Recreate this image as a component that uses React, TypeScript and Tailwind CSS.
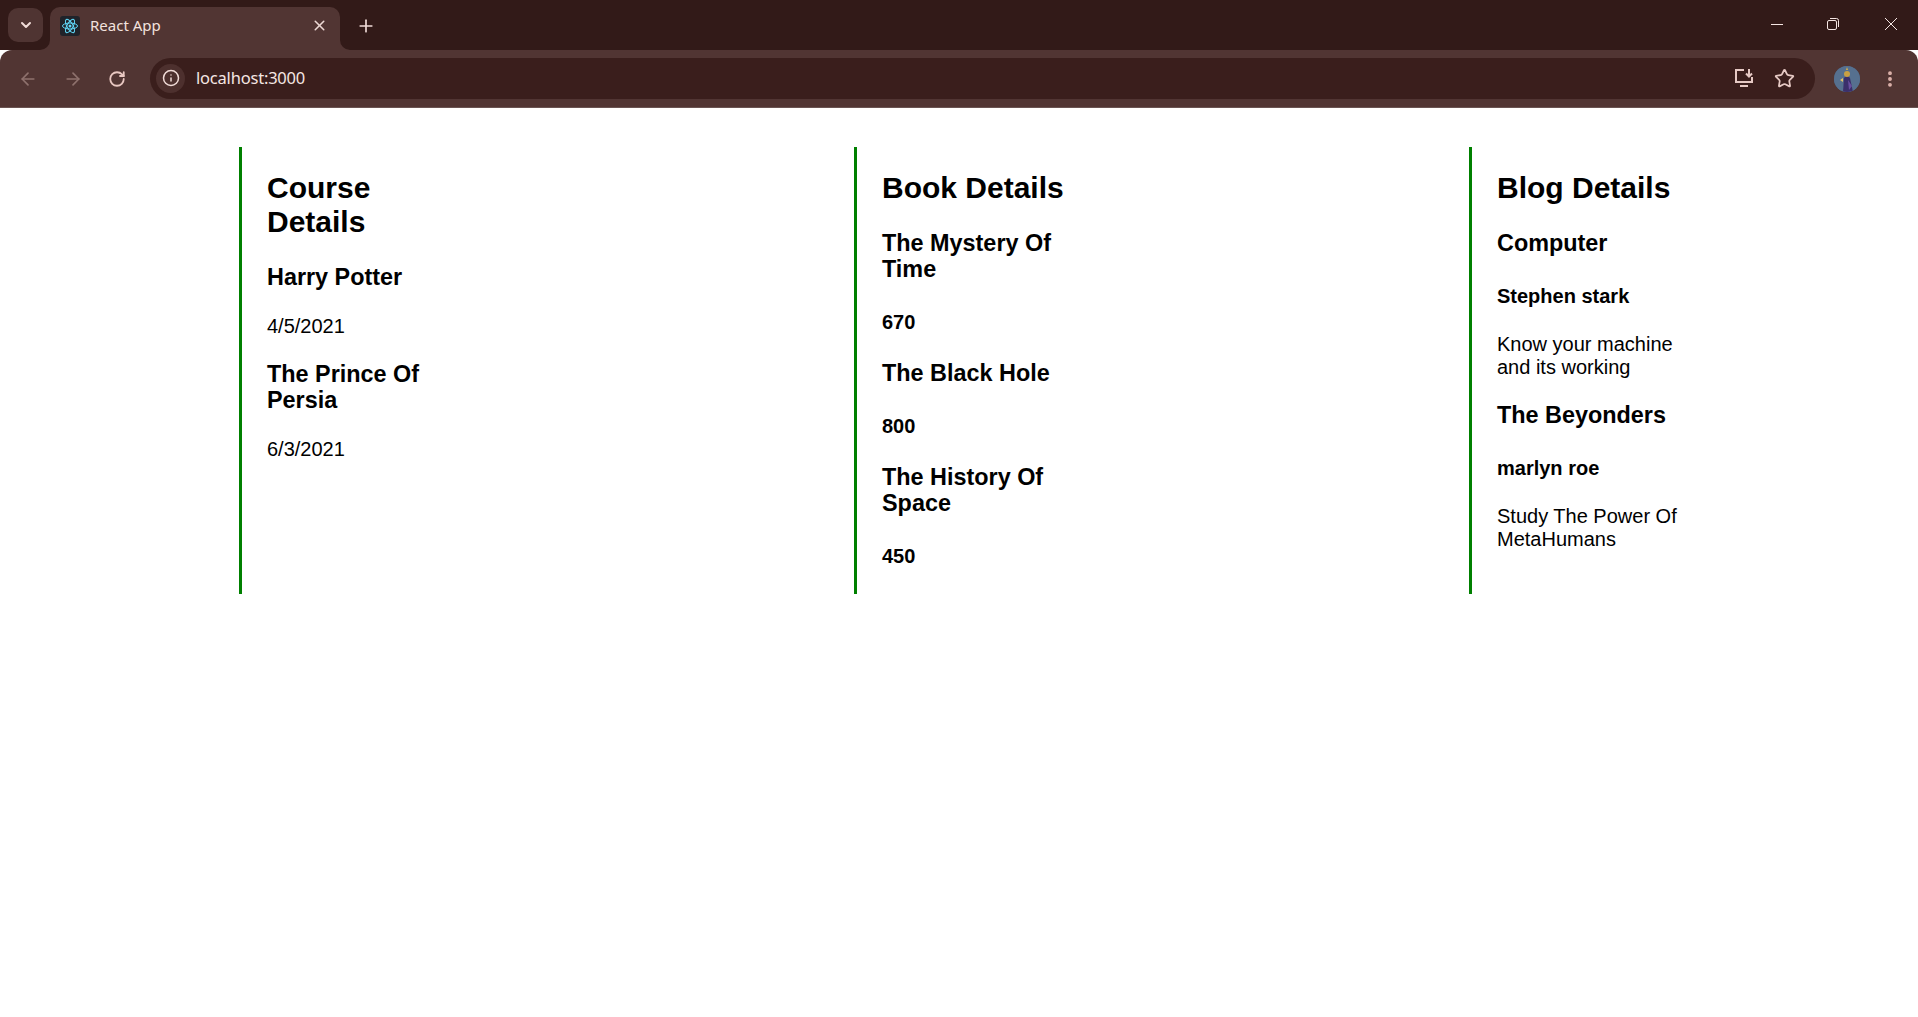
import { ArrowLeft, ArrowRight, ChevronDown, EllipsisVertical, Info, Plus, RotateCw, Star, X } from 'lucide-react';

const courses = [
  { name: 'Harry Potter', date: '4/5/2021' },
  { name: 'The Prince Of Persia', date: '6/3/2021' },
];

const books = [
  { name: 'The Mystery Of Time', price: 670 },
  { name: 'The Black Hole', price: 800 },
  { name: 'The History Of Space', price: 450 },
];

const blogs = [
  { title: 'Computer', author: 'Stephen stark', text: 'Know your machine and its working' },
  { title: 'The Beyonders', author: 'marlyn roe', text: 'Study The Power Of MetaHumans' },
];

function ReactLogo() {
  return (
    <div className="w-[20px] h-[20px] rounded-[3px] bg-[#20232a] flex items-center justify-center">
      <svg width="18" height="18" viewBox="-12 -12 24 24" fill="none" stroke="#61dafb" strokeWidth="1.3">
        <ellipse rx="10" ry="4" />
        <ellipse rx="10" ry="4" transform="rotate(60)" />
        <ellipse rx="10" ry="4" transform="rotate(120)" />
        <circle r="2" fill="#61dafb" stroke="none" />
      </svg>
    </div>
  );
}

function InstallIcon() {
  return (
    <svg width="22" height="22" viewBox="0 0 22 22" fill="none" stroke="#e6c9c4" strokeWidth="2">
      <path d="M11 3H3v12h16v-5" />
      <path d="M7 19h8" />
      <path d="M16 2v7M13 6.5l3 3 3-3" />
    </svg>
  );
}

function Avatar() {
  return (
    <div className="w-[26px] h-[26px] rounded-full overflow-hidden bg-[#4a6384]">
      <svg width="26" height="26" viewBox="0 0 26 26">
        <rect width="26" height="26" fill="#56708f" />
        <path d="M9 26 L10 12 Q13 8 16 12 L19 26 Z" fill="#3b2f6b" />
        <circle cx="13" cy="8" r="3" fill="#c9a043" />
        <path d="M12 4 L13 1 L14 4 Z" fill="#d9b04a" />
        <path d="M6 14 L9 12 L9 16 Z" fill="#e1c06a" />
        <path d="M14 14 L18 20 L15 24 Z" fill="#6a4ea0" />
      </svg>
    </div>
  );
}

function BrowserChrome() {
  return (
    <div className="font-['Noto_Sans',sans-serif]">
      {/* tab strip */}
      <div className="h-[50px] bg-[#321a18] flex items-end relative">
        <div className="absolute left-[8px] top-[8px] w-[35px] h-[34px] rounded-[10px] bg-[#4f3432] flex items-center justify-center">
          <ChevronDown size={16} strokeWidth={3} color="#f1dcd8" />
        </div>
        <div className="ml-[50px] w-[290px] h-[43px] bg-[#513533] rounded-t-[10px] flex items-center pl-[10px] pr-[12px] pb-[6px] relative">
          <svg className="absolute left-[-10px] bottom-0" width="10" height="10" viewBox="0 0 10 10">
            <path d="M10 0 V10 H0 A10 10 0 0 0 10 0 Z" fill="#513533" />
          </svg>
          <svg className="absolute right-[-10px] bottom-0" width="10" height="10" viewBox="0 0 10 10">
            <path d="M0 0 V10 H10 A10 10 0 0 1 0 0 Z" fill="#513533" />
          </svg>
          <ReactLogo />
          <span className="ml-[10px] text-[15px] text-[#f3e2de] mb-[1px]">React App</span>
          <X className="ml-auto" size={17} strokeWidth={2.2} color="#ecd8d4" />
        </div>
        <div className="ml-[16px] h-[43px] pb-[6px] flex items-center">
          <Plus size={20} strokeWidth={2} color="#f1dcd8" />
        </div>
        <div className="ml-auto h-[50px] flex items-center pb-[3px]">
          <svg width="14" height="14" viewBox="0 0 14 14" className="mr-[42px]">
            <path d="M1 7.5H13" stroke="#f5e6e3" strokeWidth="1" />
          </svg>
          <svg width="14" height="14" viewBox="0 0 14 14" className="mr-[44px]">
            <rect x="1.5" y="3.5" width="9" height="9" rx="1.5" fill="none" stroke="#f5e6e3" strokeWidth="1" />
            <path d="M4 1.5h6.5a2 2 0 0 1 2 2V10" fill="none" stroke="#f5e6e3" strokeWidth="1" />
          </svg>
          <svg width="14" height="14" viewBox="0 0 14 14" className="mr-[20px]">
            <path d="M1 1L13 13M13 1L1 13" stroke="#f5e6e3" strokeWidth="1" />
          </svg>
        </div>
      </div>

      {/* toolbar */}
      <div className="h-[58px] bg-[#513533] rounded-t-[12px] border-b border-[#6a5452] flex items-center">
        <div className="w-[150px] flex items-center">
          <ArrowLeft className="ml-[18px]" size={20} strokeWidth={2} color="#8e716d" />
          <ArrowRight className="ml-[25px]" size={20} strokeWidth={2} color="#8e716d" />
          <RotateCw className="ml-[25px]" size={18} strokeWidth={2.4} color="#e9c8c2" />
        </div>
        <div className="w-[1665px] h-[41px] mt-[-1px] rounded-full bg-[#3a1e1c] flex items-center pl-[6px] pr-[20px]">
          <div className="w-[29px] h-[29px] rounded-full bg-[#4d302e] flex items-center justify-center">
            <Info size={18} strokeWidth={2} color="#f1dcd8" />
          </div>
          <span className="ml-[11px] text-[16.5px] text-[#f5e6e3] tracking-[-0.2px]">localhost:3000</span>
          <div className="ml-auto flex items-center gap-[19px]">
            <InstallIcon />
            <Star size={21} strokeWidth={2} color="#e6c9c4" />
          </div>
        </div>
        <div className="ml-[19px]">
          <Avatar />
        </div>
        <EllipsisVertical className="ml-[20px]" size={20} strokeWidth={2.6} color="#e0b5ae" />
      </div>
    </div>
  );
}

function Column({ children }: { children: React.ReactNode }) {
  return (
    <section className="border-l-[3px] border-[#008000] pl-[25px]">
      <div className="w-[200px] flow-root">{children}</div>
    </section>
  );
}

function Title({ children }: { children: React.ReactNode }) {
  return <h1 className="text-[30px] leading-[1.117] font-bold mt-[24px] mb-[25.5px]">{children}</h1>;
}

function H3({ children }: { children: React.ReactNode }) {
  return <h3 className="text-[23.4px] leading-[1.117] font-bold my-[23.4px]">{children}</h3>;
}

function H4({ children, tight }: { children: React.ReactNode; tight?: boolean }) {
  return (
    <h4 className={`text-[20px] leading-[1.117] font-bold mt-[28.6px] ${tight ? 'mb-[25.5px]' : 'mb-[27px]'}`}>
      {children}
    </h4>
  );
}

function P({ children }: { children: React.ReactNode }) {
  return <p className="text-[20px] leading-[23px] mt-[25px] mb-[21px]">{children}</p>;
}

export default function App() {
  return (
    <div className="min-h-screen w-full bg-white overflow-hidden">
      <BrowserChrome />
      <main className="grid grid-cols-[615px_615px_449px] pl-[239px] pt-[39px] text-black font-['Liberation_Sans',Arial,sans-serif]">
        <Column>
          <Title>Course Details</Title>
          {courses.map((c) => (
            <div key={c.name}>
              <H3>{c.name}</H3>
              <P>{c.date}</P>
            </div>
          ))}
        </Column>
        <Column>
          <Title>Book Details</Title>
          {books.map((b) => (
            <div key={b.name}>
              <H3>{b.name}</H3>
              <H4>{b.price}</H4>
            </div>
          ))}
        </Column>
        <Column>
          <Title>Blog Details</Title>
          {blogs.map((b) => (
            <div key={b.title}>
              <H3>{b.title}</H3>
              <H4 tight>{b.author}</H4>
              <P>{b.text}</P>
            </div>
          ))}
        </Column>
      </main>
    </div>
  );
}
